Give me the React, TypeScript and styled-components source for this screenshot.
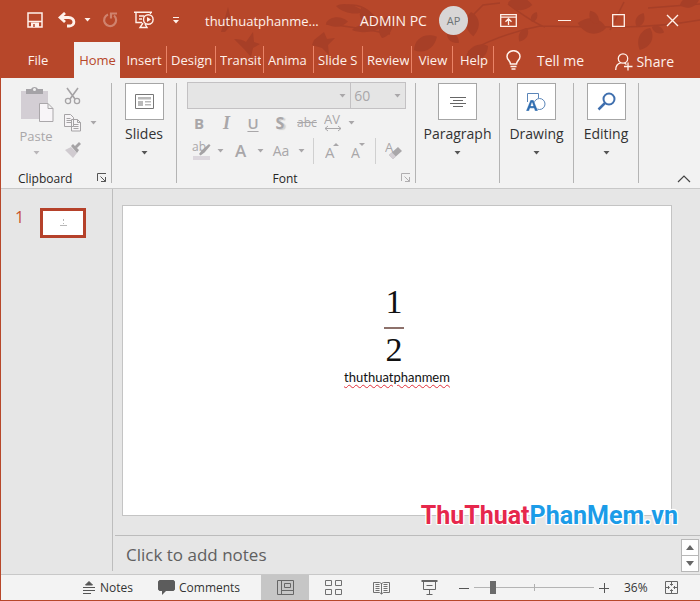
import React from "react";
import styled, { createGlobalStyle, css } from "styled-components";

const red = "#b7472a";
const cream = "#fff1ea";
const faded = "#a9a7a9";
const ink = "#333333";

const GlobalStyle = createGlobalStyle`
  * { box-sizing: border-box; }
  html, body, #root { height: 100%; }
  body { margin: 0; font-family: "Open Sans", "Noto Sans", sans-serif; font-size: 13px; color: ${ink}; }
  button { font: inherit; color: inherit; background: none; border: 0; padding: 0; margin: 0; }
  svg { display: block; flex: none; }
`;

const Window = styled.div`
  min-height: 100vh;
  display: flex;
  flex-direction: column;
  border-left: 1px solid ${red};
  border-bottom: 1px solid ${red};
  background: #e6e6e6;
  overflow: hidden;
`;

const Header = styled.header`
  position: relative;
  background: ${red};
  color: ${cream};
`;

const Branches = styled.svg`
  position: absolute;
  top: 0;
  right: 0;
`;

const TitleBar = styled.div`
  position: relative;
  display: flex;
  align-items: center;
  height: 42px;
  padding: 0 1px 2px 18px;
`;

const ToolCell = styled.button<{ $w: number; $dim?: boolean }>`
  width: ${(p) => p.$w}px;
  height: 30px;
  display: flex;
  align-items: center;
  justify-content: center;
  opacity: ${(p) => (p.$dim ? 0.35 : 1)};
`;

const DocTitle = styled.div`
  width: 143px;
  margin: 2px 12px 0;
  font-size: 13px;
  white-space: nowrap;
`;

const UserName = styled.div`
  width: 67px;
  font-size: 14px;
  white-space: nowrap;
`;

const Avatar = styled.div`
  width: 29px;
  height: 29px;
  margin: 0 auto 0 12px;
  border-radius: 50%;
  display: grid;
  place-items: center;
  flex: none;
  background: #d8d6d6;
  color: #6d7475;
  font-size: 11px;
`;

const TabBar = styled.nav`
  position: relative;
  display: flex;
  height: 36px;
  align-items: stretch;
`;

const Tab = styled.button<{ $w: number; $active?: boolean; $rule?: boolean }>`
  position: relative;
  width: ${(p) => p.$w}px;
  padding: 0 3px 0 4px;
  font-size: 13px;
  text-align: left;
  white-space: nowrap;
  ${(p) => p.$active && css`background: #f2f2f2; color: ${red};`}
  ${(p) =>
    p.$rule &&
    css`
      &::after {
        content: "";
        position: absolute;
        right: 0;
        top: 4px;
        bottom: 5px;
        width: 1px;
        background: #ea8468;
      }
    `}
`;

const TabText = styled.span<{ $center?: boolean }>`
  display: block;
  overflow: hidden;
  text-align: ${(p) => (p.$center ? "center" : "left")};
`;

const TellMe = styled.button`
  display: flex;
  align-items: center;
  gap: 16px;
  margin-left: 12px;
  font-size: 14px;
`;

const Share = styled.button`
  display: flex;
  align-items: center;
  gap: 3px;
  margin: 3px 26px 0 auto;
  font-size: 14px;
`;

const Ribbon = styled.section`
  display: flex;
  background: #f2f2f2;
  padding: 5px 0;
  height: 111px;
  border-bottom: 1px solid #c8c8c8;
`;

const Group = styled.div<{ $w: number }>`
  width: ${(p) => p.$w}px;
  border-right: 1px solid #b4b4b4;
  display: flex;
  flex-direction: column;
  align-items: center;
`;

const GroupButton = styled.button`
  display: flex;
  flex-direction: column;
  align-items: center;
  font-size: 14px;
  line-height: 20px;
  gap: 4px;
`;

const IconBox = styled.span`
  width: 39px;
  height: 37px;
  display: grid;
  place-items: center;
  background: #fff;
  border: 1px solid #a6a6a6;
`;

const CaretSlot = styled.span`
  height: 10px;
  display: grid;
  place-items: center;
`;

const ClipTools = styled.div`
  flex: 1;
  align-self: stretch;
  display: flex;
  padding: 3px 0 0 17px;
`;

const PasteButton = styled.button`
  width: 36px;
  display: flex;
  flex-direction: column;
  align-items: center;
  color: ${faded};
  font-size: 13px;
  line-height: 18px;
  gap: 3px;
`;

const SmallTools = styled.div`
  display: flex;
  flex-direction: column;
  gap: 8px;
  padding-left: 10px;
`;

const SmallTool = styled.button`
  height: 19px;
  display: flex;
  align-items: center;
  gap: 8px;
`;

const GroupFooter = styled.div`
  align-self: stretch;
  display: grid;
  grid-template-columns: 1fr auto;
  align-items: center;
  height: 18px;
  margin-bottom: -4px;
  padding-right: 4px;
  font-size: 12px;
  color: #262626;
`;

const FooterLabel = styled.span<{ $center?: boolean }>`
  text-align: ${(p) => (p.$center ? "center" : "left")};
  padding: ${(p) => (p.$center ? "0 8px 0 0" : "0 0 0 17px")};
`;

const FontTools = styled.div`
  flex: 1;
  align-self: stretch;
  padding: 0 9px 0 10px;
`;

const Combos = styled.div`
  display: grid;
  grid-template-columns: 3fr 1fr;
  margin-top: -1px;
`;

const ComboWrap = styled.label`
  position: relative;
  display: block;
  & + & { margin-left: -1px; }
`;

const Combo = styled.select`
  appearance: none;
  display: block;
  width: 100%;
  height: 27px;
  padding: 0 3px;
  border: 1px solid #c3c1c3;
  border-radius: 0;
  background: #e5e5e5;
  color: ${faded};
  font: 14px "Open Sans", sans-serif;
  opacity: 1;
`;

const ComboCaret = styled.span`
  position: absolute;
  right: 5px;
  top: 12px;
`;

const ToolRow = styled.div`
  display: flex;
  align-items: center;
  height: 28px;
  color: ${faded};
`;

const Glyph = styled.button<{ $w: number; $kind?: string }>`
  width: ${(p) => p.$w}px;
  height: 26px;
  flex: none;
  display: grid;
  place-items: center;
  font-size: 15px;
  line-height: 20px;
  ${(p) => p.$kind === "bold" && css`font-weight: 700;`}
  ${(p) => p.$kind === "italic" && css`font: italic bold 18px "Liberation Serif", serif;`}
  ${(p) => p.$kind === "under" && css`font-weight: 600; text-decoration: underline; text-underline-offset: 2px;`}
  ${(p) => p.$kind === "shadow" && css`font-weight: 700; font-size: 16px; text-shadow: 2px 1px 1px #cfcfcf;`}
  ${(p) => p.$kind === "strike" && css`font-size: 12px; text-decoration: line-through;`}
  ${(p) => p.$kind === "case" && css`font-size: 14px;`}
  ${(p) => p.$kind === "color" && css`font-weight: 600; font-size: 17px;`}
`;

const Rule = styled.span<{ $before: number; $after: number }>`
  flex: none;
  width: 1px;
  height: 26px;
  background: #d0d0d0;
  margin: 0 ${(p) => p.$after}px 0 ${(p) => p.$before}px;
`;

const Collapse = styled.button`
  margin: auto 9px 0 auto;
`;

const Body = styled.main`
  flex: 1;
  display: flex;
  min-height: 0;
`;

const Slides = styled.aside`
  width: 112px;
  margin-bottom: 3px;
  padding: 19px 0 0 14px;
  border-right: 1px solid #bdbdbd;
  display: flex;
  align-items: flex-start;
  gap: 16px;
  font-size: 16px;
  line-height: 18px;
  color: #c9532f;
`;

const Thumb = styled.button`
  width: 46px;
  height: 30px;
  border: 3px solid #b5412a;
  background: #fff;
  display: grid;
  place-items: center;
`;

const Editor = styled.div`
  flex: 1;
  min-width: 0;
  display: flex;
  flex-direction: column;
`;

const Stage = styled.div`
  position: relative;
  flex: 1;
  display: flex;
  padding: 16px 28px 19px 9px;
`;

const Slide = styled.article`
  flex: 1;
  background: #fff;
  border: 1px solid #c4c4c4;
  display: flex;
  flex-direction: column;
  align-items: center;
  justify-content: center;
  padding-bottom: 50px;
  color: #111;
`;

const Fraction = styled.div`
  display: flex;
  flex-direction: column;
  align-items: center;
  padding-right: 6px;
  font: 34px/34px "Liberation Serif", serif;
`;

const FractionBar = styled.span`
  width: 20px;
  height: 2px;
  margin: 8px 0 4px;
  background: #8d716b;
`;

const SlideText = styled.p`
  margin: 0;
  font: 13px/20px Lato, sans-serif;
  text-decoration: underline wavy #e0303a 1px;
  text-underline-offset: 2px;
`;

const Watermark = styled.div`
  position: absolute;
  right: 22px;
  bottom: 1px;
  font: bold 25px/36px "Roboto", "Liberation Sans", sans-serif;
  color: #e6274c;
  text-shadow: 1px 1px 0 #fff, -1px -1px 0 #fff, 1px -1px 0 #fff, -1px 1px 0 #fff, 0 0 3px #fff;
  white-space: nowrap;
`;

const Blue = styled.span`
  color: #1b9ce8;
`;

const NotesPane = styled.div`
  height: 39px;
  margin-left: 2px;
  border-top: 1px solid #bcbcbc;
  display: flex;
  align-items: center;
`;

const NotesInput = styled.input`
  flex: 1;
  min-width: 0;
  border: 0;
  padding: 0 11px;
  background: none;
  font: 17px/24px "Open Sans", sans-serif;
  &::placeholder { color: #606060; opacity: 1; }
`;

const Stepper = styled.div`
  margin-right: 1px;
  display: flex;
  flex-direction: column;
`;

const StepButton = styled.button`
  width: 18px;
  height: 17px;
  display: grid;
  place-items: center;
  background: #fff;
  border: 1px solid #b8b8b8;
  & + & { margin-top: -1px; }
`;

const StatusBar = styled.footer`
  height: 26px;
  display: flex;
  align-items: stretch;
  background: #f3f3f3;
  border-top: 1px solid #c8c8c8;
  padding-left: 81px;
  font-size: 12px;
`;

const StatusButton = styled.button<{ $w: number }>`
  width: ${(p) => p.$w}px;
  display: flex;
  align-items: center;
  gap: 4px;
`;

const ViewButton = styled.button<{ $active?: boolean }>`
  width: 48px;
  display: grid;
  place-items: center;
  background: ${(p) => (p.$active ? "#c6c6c6" : "none")};
`;

const Zoom = styled.div`
  margin-left: auto;
  padding-right: 22px;
  display: flex;
  align-items: center;
`;

const ZoomSlider = styled.input`
  appearance: none;
  width: 120px;
  height: 16px;
  margin: 0 5px;
  background:
    linear-gradient(#b0b0b0, #b0b0b0) center / 1px 7px no-repeat,
    linear-gradient(#b4b4b4, #b4b4b4) center / 100% 1px no-repeat;
  &::-webkit-slider-thumb {
    appearance: none;
    width: 6px;
    height: 13px;
    background: #6b6b6b;
  }
`;

const Percent = styled.output`
  width: 24px;
  margin: 0 17px 0 15px;
`;

const Caret = ({ color = "#a9a7a9" }: { color?: string }) => (
  <svg width="7" height="4" viewBox="0 0 7 4"><path d="M.5 0h6L3.500 3.500z" fill={color} /></svg>
);

const Launcher = ({ color = "#555" }: { color?: string }) => (
  <svg width="10" height="10" viewBox="0 0 10 10" fill="none" stroke={color}>
    <path d="M.5 8V.5H9M3.500 3.500l5 5M8.500 4v4.500H4" />
  </svg>
);

const leaf = "M0 0C4-8 14-10 22-2C16 6 6 7 0 0Z";

const Leaves = () => (
  <Branches width="500" height="78" viewBox="200 0 500 78" fill="#9f3b26" opacity=".65" aria-hidden="true">
    <g fill="none" stroke="#9f3b26" strokeWidth="1.500">
      <path d="M326 24Q356 27 390 34M468 52Q500 34 540 26Q580 27 620 27T700 20M472 16L483 5L500 3M508 4Q532 22 545 27M345 6Q368 0 384 32M610 30L624 2M648 8L700 4" />
    </g>
    <path d={leaf} transform="translate(326 23) scale(1 .8)" />
    <path d={leaf} transform="translate(336 6) rotate(15) scale(1.300 .7)" />
    <path d={leaf} transform="translate(352 30) rotate(-5) scale(1.500 .7)" />
    <path d={leaf} transform="translate(361 8) rotate(65)" />
    <path d={leaf} transform="translate(382 38) rotate(-65) scale(1.100)" />
    <path d={leaf} transform="translate(414 50) rotate(-25) scale(1.200)" />
    <path d={leaf} transform="translate(447 33) rotate(45) scale(.7)" />
    <path d={leaf} transform="translate(471 12) rotate(90) scale(1.100)" />
    <path d={leaf} transform="translate(488 46) rotate(155) scale(1.200)" />
    <path d={leaf} transform="translate(508 3) rotate(10) scale(1.100)" />
    <path d={leaf} transform="translate(527 28) rotate(125) scale(.7)" />
    <path d={leaf} transform="translate(532 22) rotate(-60) scale(.5)" />
    <path d={leaf} transform="translate(606 28) rotate(195) scale(1.300)" />
    <path d={leaf} transform="translate(598 24) rotate(-115) scale(.7)" />
    <path d={leaf} transform="translate(650 28) rotate(120) scale(1.100)" />
    <path d={leaf} transform="translate(652 27) rotate(30) scale(.6)" />
    <path d={leaf} transform="translate(637 27) rotate(-60) scale(.7)" />
    <path d={leaf} transform="translate(680 5) rotate(-10) scale(.9)" />
    <path d="M221 32l7-25 4 17-7 8zM234 39q8 0 12 3l7-10 1 10 6 2-7 4-2 9-7-8zM314 40l10-8 3 7 8-1-7 7 1 10-7-7-10-3z" />
  </Branches>
);

const tabs = [
  { name: "Insert", shown: "Insert", w: 47, center: true },
  { name: "Design", shown: "Design", w: 49 },
  { name: "Transitions", shown: "Transit", w: 48 },
  { name: "Animations", shown: "Anima", w: 50 },
  { name: "Slide Show", shown: "Slide S", w: 49 },
  { name: "Review", shown: "Review", w: 49 },
  { name: "View", shown: "View", w: 41, center: true },
  { name: "Help", shown: "Help", w: 41, center: true },
];

const bigGroups = [
  {
    label: "Paragraph",
    w: 84,
    icon: <svg width="16" height="14" viewBox="0 0 16 14" stroke="#666"><path d="M0 2.500h16M3 5.500h10M0 8.500h16M3 11.500h10" /></svg>,
  },
  {
    label: "Drawing",
    w: 74,
    icon: (
      <svg width="20" height="20" viewBox="0 0 20 20" fill="none">
        <path d="M1.500 10V1.500h11V6" stroke="#5a85b8" />
        <circle cx="13.500" cy="12" r="5.500" stroke="#5a85b8" fill="#fff" />
        <path d="M0 19L4.500 8h3L12 19H9l-1-2.800H4L3 19zM4.800 14h2.500L6 10.500z" fill="#2f6db0" fillRule="evenodd" stroke="#fff" strokeWidth=".3" />
      </svg>
    ),
  },
  {
    label: "Editing",
    w: 65,
    icon: (
      <svg width="19" height="19" viewBox="0 0 19 19" fill="none" stroke="#3f6fae" strokeWidth="2">
        <circle cx="12" cy="7" r="5.500" /><path d="M8 11L1.500 17.500" strokeWidth="2.500" />
      </svg>
    ),
  },
];

export default function App() {
  return (
    <>
      <GlobalStyle />
      <Window>
        <Header>
          <Leaves />
          <TitleBar>
            <ToolCell $w={32} aria-label="Save">
              <svg width="16" height="16" viewBox="0 0 16 16" fill="none" stroke={cream} strokeWidth="1.500">
                <path d="M1 1h14v14H1zM1 9.500h14" /><path d="M4 15v-4.500h8V15z" fill={cream} stroke="none" /><path d="M7 12v3" stroke={red} />
              </svg>
            </ToolCell>
            <ToolCell $w={32} aria-label="Undo">
              <svg width="18" height="16" viewBox="0 0 18 16" fill="none" stroke={cream} strokeWidth="2.800">
                <path d="M7 1L2 5.500L7 10M2 5.500h8.500c7 0 7 8.500 1 8.500H9" />
              </svg>
            </ToolCell>
            <ToolCell $w={8} aria-label="Undo history"><Caret color={cream} /></ToolCell>
            <ToolCell $w={38} $dim aria-label="Redo">
              <svg width="16" height="16" viewBox="0 0 16 16" fill="none" stroke={cream} strokeWidth="2.200">
                <path d="M6 2.500A6 6 0 1 0 12 3.500M9 6.500V1.500h6" />
              </svg>
            </ToolCell>
            <ToolCell $w={30} aria-label="Start from beginning">
              <svg width="20" height="18" viewBox="0 0 20 18" fill="none" stroke={cream} strokeWidth="1.400">
                <path d="M0 1.200h18M2 1v10.500h6M5 5h5M5 8h3M9 12l-3 4.500h7L11 13M16.500 1v2" />
                <circle cx="14.300" cy="8.500" r="4.800" /><path d="M13 6l4 2.500-4 2.500z" fill={cream} stroke="none" />
              </svg>
            </ToolCell>
            <ToolCell $w={34} aria-label="Customize toolbar">
              <svg width="6" height="7" viewBox="0 0 6 7" fill={cream}><path d="M0 0h6v1H0zM0 3h6L3 6.500z" /></svg>
            </ToolCell>
            <DocTitle>thuthuatphanme...</DocTitle>
            <UserName>ADMIN PC</UserName>
            <Avatar>AP</Avatar>
            <ToolCell $w={58} aria-label="Ribbon display options">
              <svg width="17" height="13" viewBox="0 0 17 13" fill="none" stroke={cream} strokeWidth="1.300">
                <path d="M.7.700h15.600v11.600H.7zM.7 3.200h15.600M8.500 11V5M5.500 7.700l3-3 3 3" />
              </svg>
            </ToolCell>
            <ToolCell $w={54} aria-label="Minimize">
              <svg width="13" height="13" stroke={cream}><path d="M0 6.500h13" /></svg>
            </ToolCell>
            <ToolCell $w={54} aria-label="Maximize">
              <svg width="13" height="13" fill="none" stroke={cream} strokeWidth="1.300"><path d="M.7.700h11.600v11.600H.7z" /></svg>
            </ToolCell>
            <ToolCell $w={54} aria-label="Close">
              <svg width="13" height="13" stroke={cream} strokeWidth="1.400"><path d="M1 1l11 11M12 1L1 12" /></svg>
            </ToolCell>
          </TitleBar>
          <TabBar>
            <Tab $w={73}><TabText $center>File</TabText></Tab>
            <Tab $w={46} $active><TabText $center>Home</TabText></Tab>
            {tabs.map((t) => (
              <Tab key={t.name} $w={t.w} $rule aria-label={t.name}>
                <TabText $center={t.center}>{t.shown}</TabText>
              </Tab>
            ))}
            <TellMe>
              <svg width="15" height="20" viewBox="0 0 15 20" fill="none" stroke={cream} strokeWidth="1.500">
                <path d="M4.500 14C4.500 11 1 10 1 6.500a6.500 5.800 0 0 1 13 0C14 10 10.500 11 10.500 14zM4.500 16.500h6M5.500 19h4" />
              </svg>
              Tell me
            </TellMe>
            <Share>
              <svg width="18" height="18" viewBox="0 0 18 18" fill="none" stroke={cream} strokeWidth="1.300">
                <circle cx="8" cy="5.500" r="4.700" /><path d="M.7 17c0-4 2-6.500 5-7.200M9.500 10l2 1.500M13 9.500v8M9 13.500h8.500" />
              </svg>
              Share
            </Share>
          </TabBar>
        </Header>

        <Ribbon>
          <Group $w={111}>
            <ClipTools>
              <PasteButton>
                <svg width="36" height="38" viewBox="0 0 36 38">
                  <path d="M3 5h27v28H3z" fill="#d3ced4" /><path d="M8 3h5a4 4 0 0 1 7 0h5v5H8z" fill="#a5a3a7" /><circle cx="16.500" cy="3.500" r="1.500" fill="#f2f2f2" />
                  <path d="M21.500 17.500h8.500l5 5v13H21.500zM30 17.500v5h5" fill="#f8f5f8" stroke="#aaa7aa" />
                </svg>
                Paste
                <CaretSlot><Caret color="#b9b6b9" /></CaretSlot>
              </PasteButton>
              <SmallTools>
                <SmallTool aria-label="Cut">
                  <svg width="17" height="18" viewBox="0 0 17 18" fill="none" stroke="#a5a3a5" strokeWidth="1.600">
                    <path d="M3 1l8 11M14 1L6 12" /><circle cx="4" cy="14" r="2.600" strokeWidth="1.300" /><circle cx="13" cy="14" r="2.600" strokeWidth="1.300" />
                  </svg>
                </SmallTool>
                <SmallTool aria-label="Copy">
                  <svg width="18" height="18" viewBox="0 0 18 18" fill="#f6f4f6" stroke="#a5a3a5">
                    <path d="M.5.500h6l3 3v9h-9zM2.500 4.500h4M2.500 6.500h5M2.500 8.500h5M7.500 5.500h6l3 3v8.500h-9zM13.500 5.500v3h3M9.500 10.500h5M9.500 12.500h5M9.500 14.500h5" />
                  </svg>
                  <Caret />
                </SmallTool>
                <SmallTool aria-label="Format painter">
                  <svg width="18" height="16" viewBox="0 0 18 16">
                    <path d="M1 8l6-3 6 6-4 5z" fill="#d0cbd0" /><path d="M7 4l2-2 6 6-2 3zM11 4l4-4 2 2-4 4z" fill="#a5a3a5" />
                  </svg>
                </SmallTool>
              </SmallTools>
            </ClipTools>
            <GroupFooter><FooterLabel>Clipboard</FooterLabel><Launcher /></GroupFooter>
          </Group>

          <Group $w={65}>
            <GroupButton>
              <IconBox>
                <svg width="19" height="15" viewBox="0 0 19 15" fill="none" stroke="#777">
                  <path d="M.5.500h18v14H.5z" /><path d="M3 3h13v2.500H3zM3 7h5v5H3zM10 7h6v1.500h-6zM10 10h6v1.500h-6z" fill="#b9b9b9" stroke="none" />
                </svg>
              </IconBox>
              Slides
              <CaretSlot><Caret color="#555" /></CaretSlot>
            </GroupButton>
          </Group>

          <Group $w={239}>
            <FontTools>
              <Combos>
                <ComboWrap>
                  <Combo disabled aria-label="Font"><option></option></Combo>
                  <ComboCaret><Caret /></ComboCaret>
                </ComboWrap>
                <ComboWrap>
                  <Combo disabled aria-label="Font size"><option>60</option></Combo>
                  <ComboCaret><Caret /></ComboCaret>
                </ComboWrap>
              </Combos>
              <ToolRow>
                <Glyph $w={24} $kind="bold">B</Glyph>
                <Glyph $w={31} $kind="italic">I</Glyph>
                <Glyph $w={22} $kind="under">U</Glyph>
                <Glyph $w={32} $kind="shadow">S</Glyph>
                <Glyph $w={22} $kind="strike">abc</Glyph>
                <Glyph $w={30} aria-label="Character spacing">
                  <svg width="18" height="18" viewBox="0 0 18 18" fill="none" stroke={faded}>
                    <text x="0" y="10" fontSize="13" fontFamily="Open Sans" fill={faded} stroke="none">AV</text>
                    <path d="M1 14.500h16M4 12l-3 2.500L4 17M14 12l3 2.500-3 2.500" />
                  </svg>
                </Glyph>
                <Caret />
              </ToolRow>
              <ToolRow>
                <Glyph $w={30} aria-label="Highlight color">
                  <svg width="20" height="20" viewBox="0 0 20 20">
                    <text x="0" y="10" fontSize="12" fontFamily="Open Sans" fill={faded}>ab</text>
                    <path d="M7 13l3-4 7-6 1.500 1.500-6 7-4 3z" fill="#a5a3a5" /><path d="M1 15h17v4H1z" fill="#dcd7dd" />
                  </svg>
                </Glyph>
                <Caret />
                <Glyph $w={33} $kind="color">A</Glyph>
                <Caret />
                <Glyph $w={34} $kind="case">Aa</Glyph>
                <Caret />
                <Rule $before={8} $after={5} />
                <Glyph $w={26} aria-label="Increase font size">
                  <svg width="14" height="18" viewBox="0 0 14 18" fill={faded}>
                    <text x="0" y="16" fontSize="15" fontFamily="Open Sans">A</text><path d="M8 4l3-3 3 3z" />
                  </svg>
                </Glyph>
                <Glyph $w={26} aria-label="Decrease font size">
                  <svg width="14" height="18" viewBox="0 0 14 18" fill={faded}>
                    <text x="0" y="16" fontSize="14" fontFamily="Open Sans">A</text><path d="M8 1l3 3 3-3z" />
                  </svg>
                </Glyph>
                <Rule $before={4} $after={8} />
                <Glyph $w={20} aria-label="Clear formatting">
                  <svg width="18" height="20" viewBox="0 0 18 20" fill={faded}>
                    <text x="0" y="11" fontSize="13" fontFamily="Open Sans">A</text>
                    <path d="M4 14l9-8 4 4-9 8z" /><path d="M4 14l3-2.500 4 4L8 18z" fill="#d3ced3" />
                  </svg>
                </Glyph>
              </ToolRow>
            </FontTools>
            <GroupFooter><FooterLabel $center>Font</FooterLabel><Launcher color="#b0aeb0" /></GroupFooter>
          </Group>

          {bigGroups.map((g) => (
            <Group key={g.label} $w={g.w}>
              <GroupButton>
                <IconBox>{g.icon}</IconBox>
                {g.label}
                <CaretSlot><Caret color="#555" /></CaretSlot>
              </GroupButton>
            </Group>
          ))}
          <Collapse aria-label="Collapse the ribbon">
            <svg width="14" height="8" viewBox="0 0 14 8" fill="none" stroke="#444" strokeWidth="1.200"><path d="M1 7l6-6 6 6" /></svg>
          </Collapse>
        </Ribbon>

        <Body>
          <Slides>
            1
            <Thumb aria-label="Slide 1">
              <svg width="8" height="10" stroke="#999"><path d="M4.500 1v2M4.500 5v1M1 7.500h7" strokeWidth=".7" /></svg>
            </Thumb>
          </Slides>
          <Editor>
            <Stage>
              <Slide>
                <Fraction><span>1</span><FractionBar /><span>2</span></Fraction>
                <SlideText>thuthuatphanmem</SlideText>
              </Slide>
              <Watermark>ThuThuat<Blue>PhanMem.vn</Blue></Watermark>
            </Stage>
            <NotesPane>
              <NotesInput aria-label="Notes" placeholder="Click to add notes" />
              <Stepper>
                <StepButton aria-label="Scroll up"><svg width="8" height="5" fill="#666"><path d="M0 5l4-5 4 5z" /></svg></StepButton>
                <StepButton aria-label="Scroll down"><svg width="8" height="5" fill="#666"><path d="M0 0l4 5 4-5z" /></svg></StepButton>
              </Stepper>
            </NotesPane>
          </Editor>
        </Body>

        <StatusBar>
          <StatusButton $w={76}>
            <svg width="14" height="13" viewBox="0 0 14 13" stroke="#555" fill="none"><path d="M3.500 4L7 .5 10.500 4z" fill="#555" /><path d="M1 6.500h12M1 9.500h12M1 12.500h8" /></svg>
            Notes
          </StatusButton>
          <StatusButton $w={103}>
            <svg width="17" height="15" viewBox="0 0 17 15"><path d="M1.500 0h14L17 1.500v8L15.500 11H8l-4 4v-4H1.500L0 9.500v-8z" fill="#5c5c5c" /></svg>
            Comments
          </StatusButton>
          <ViewButton $active aria-label="Normal view">
            <svg width="17" height="15" viewBox="0 0 17 15" fill="none" stroke="#666"><path d="M.5.500h16v14H.5zM4.500.500v14M7.500 3.500h6v4h-6zM4.500 10.500h12" /></svg>
          </ViewButton>
          <ViewButton aria-label="Slide sorter">
            <svg width="17" height="15" viewBox="0 0 17 15" fill="none" stroke="#707070"><path d="M.5.500h6v5h-6zM10.500.500h6v5h-6zM.5 9.500h6v5h-6zM10.500 9.500h6v5h-6z" /></svg>
          </ViewButton>
          <ViewButton aria-label="Reading view">
            <svg width="17" height="14" viewBox="0 0 17 14" fill="none" stroke="#707070"><path d="M.5 1.500h6l2 1 2-1h6v10h-6l-2 1.500-2-1.500h-6zM8.500 2v11M2.500 3.500h4M2.500 5.500h4M2.500 7.500h4M2.500 9.500h4M10.500 3.500h4M10.500 5.500h4M10.500 7.500h4M10.500 9.500h4" /></svg>
          </ViewButton>
          <ViewButton aria-label="Slide show">
            <svg width="17" height="15" viewBox="0 0 17 15" fill="none" stroke="#666"><path d="M.5 1h16" strokeWidth="2" /><path d="M2.500 2v7.500h12V2M5.500 5.500h6M8.500 9.500V14M5.500 14.500h6" /></svg>
          </ViewButton>
          <Zoom>
            <button aria-label="Zoom out"><svg width="10" height="10" stroke="#555"><path d="M0 5.500h10" /></svg></button>
            <ZoomSlider type="range" min="0" max="100" defaultValue="14" aria-label="Zoom" />
            <button aria-label="Zoom in"><svg width="10" height="10" stroke="#555"><path d="M0 5.500h10M5.500 0v10" /></svg></button>
            <Percent>36%</Percent>
            <button aria-label="Fit slide to window">
              <svg width="13" height="13" viewBox="0 0 13 13" fill="none" stroke="#666"><path d="M.5.500h12v12H.5zM6.500 1v3M5 3l1.500 1.500L8 3M6.500 12V9M5 10l1.500-1.500L8 10M1 6.500h3M3 5l1.500 1.500L3 8M12 6.500H9M10 5L8.500 6.500 10 8" /></svg>
            </button>
          </Zoom>
        </StatusBar>
      </Window>
    </>
  );
}
